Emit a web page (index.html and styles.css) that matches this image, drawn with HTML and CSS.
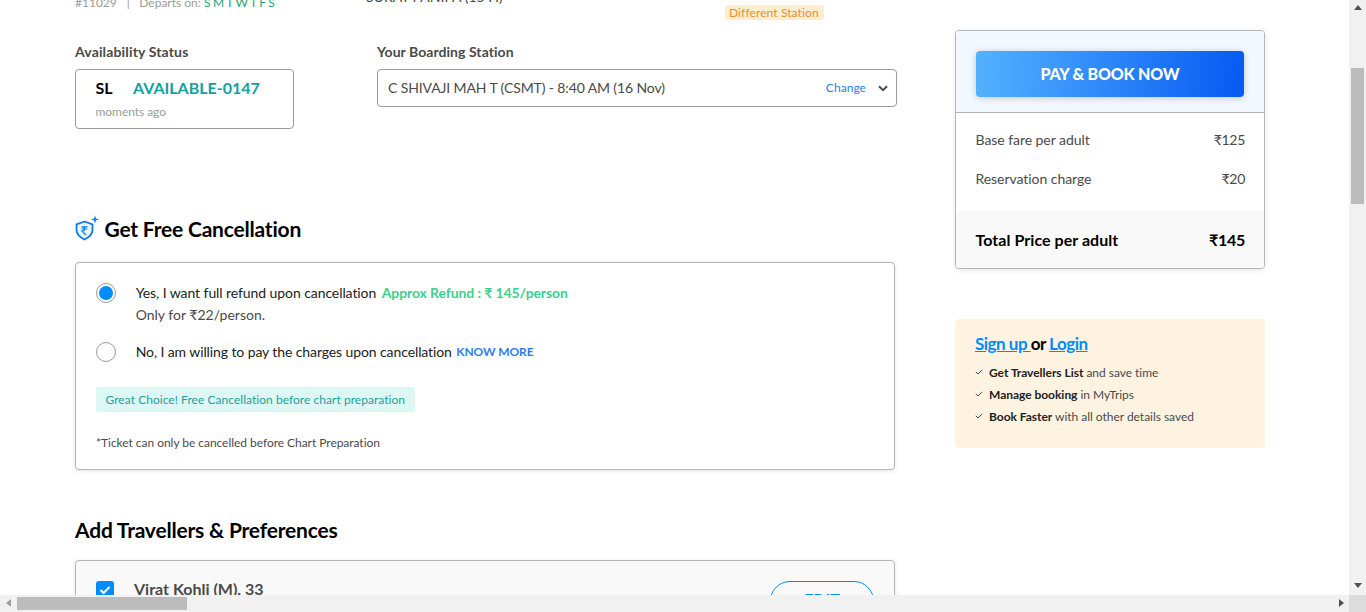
FILE: index.html
```html
<!DOCTYPE html>
<html lang="en">
<head>
<meta charset="utf-8">
<title>Review Booking</title>
<link rel="stylesheet" href="styles.css">
</head>
<body>
<div class="window">
  <div class="scrolled">
    <main class="left">
      <div class="train-row">
        <div class="train-meta"><span>#11029</span><span class="sep">|</span><span>Departs on: <b class="days">S M T W T F S</b></span></div>
        <div class="train-duration">SURAT PANIPA (15 H)</div>
        <div class="station-tag">Different Station</div>
      </div>
      <div class="status-row">
        <div class="status-col">
          <div class="field-label label-status">Availability Status</div>
          <div class="status-box">
            <div class="status-line"><span class="class-code">SL</span><span class="avail">AVAILABLE-0147</span></div>
            <div class="moments">moments ago</div>
          </div>
        </div>
        <div class="boarding-col">
          <div class="field-label">Your Boarding Station</div>
          <div class="boarding-box">
            <span class="boarding-name">C SHIVAJI MAH T (CSMT) - 8:40 AM (16 Nov)</span>
            <span class="change">Change</span>
            <svg class="chevron" width="10" height="7" viewBox="0 0 10 7"><path d="M1 1.200 5 5.200 9 1.200" fill="none" stroke="#4a4a4a" stroke-width="2"/></svg>
          </div>
        </div>
      </div>
      <h2 class="section-title cancel-title">
        <svg class="shield" width="26" height="26" viewBox="0 0 26 26">
          <path d="M10.500 6.500 18.500 9.300V15C18.500 19 14.500 22.500 10.500 24.500 6.500 22.500 2.500 19 2.500 15V9.300Z" fill="#eaf5ff" stroke="#0a7be8" stroke-width="1.800" stroke-linejoin="round"/>
          <path d="M7.500 11.800H13.500M7.500 14H13.500M8 11.800C11.500 11.800 11.500 16.200 8 16.200L12 20" fill="none" stroke="#0a7be8" stroke-width="1.200"/>
          <path d="M21 0.500 22 3.500 25 4.500 22 5.500 21 8.500 20 5.500 17 4.500 20 3.500Z" fill="#0a84f0"/>
        </svg>
        Get Free Cancellation
      </h2>
      <section class="card cancel-card">
        <div class="option option-yes">
          <span class="radio radio-on"></span>
          <div>
            <div class="option-text">Yes, I want full refund upon cancellation <b class="refund">Approx Refund : ₹ 145/person</b></div>
            <div class="only-for">Only for ₹22/person.</div>
          </div>
        </div>
        <div class="option option-no">
          <span class="radio"></span>
          <div class="option-text no-text">No, I am willing to pay the charges upon cancellation <b class="know-more">KNOW MORE</b></div>
        </div>
        <div class="choice">Great Choice! Free Cancellation before chart preparation</div>
        <div class="ticket-note">*Ticket can only be cancelled before Chart Preparation</div>
      </section>
      <h2 class="section-title travellers-title">Add Travellers &amp; Preferences</h2>
      <section class="card traveller-card">
        <span class="checkbox"><svg width="12" height="10" viewBox="0 0 12 10"><path d="M1.500 5 4.500 8 10.500 2" fill="none" stroke="#fff" stroke-width="2"/></svg></span>
        <div class="traveller-name">Virat Kohli (M), 33</div>
        <button class="edit">EDIT</button>
      </section>
    </main>
    <aside class="right">
      <section class="card fare-card">
        <div class="fare-head"><button class="pay">PAY &amp; BOOK NOW</button></div>
        <div class="fare-rows">
          <div class="fare-row"><span>Base fare per adult</span><span class="amount">₹125</span></div>
          <div class="fare-row"><span>Reservation charge</span><span class="amount">₹20</span></div>
        </div>
        <div class="fare-total"><span>Total Price per adult</span><span class="amount">₹145</span></div>
      </section>
      <section class="login-card">
        <div class="login-title"><a href="#">Sign up </a> or <a href="#">Login</a></div>
        <ul class="perks">
          <li><svg width="8" height="6" viewBox="0 0 8 6"><path d="M.8 2.800 3 5 7.200 .8" fill="none" stroke="#4a4a4a" stroke-width="1"/></svg><span><b>Get Travellers List</b> and save time</span></li>
          <li><svg width="8" height="6" viewBox="0 0 8 6"><path d="M.8 2.800 3 5 7.200 .8" fill="none" stroke="#4a4a4a" stroke-width="1"/></svg><span><b>Manage booking</b> in MyTrips</span></li>
          <li><svg width="8" height="6" viewBox="0 0 8 6"><path d="M.8 2.800 3 5 7.200 .8" fill="none" stroke="#4a4a4a" stroke-width="1"/></svg><span><b>Book Faster</b> with all other details saved</span></li>
        </ul>
      </section>
    </aside>
  </div>
  <div class="vbar"><span class="arrow-up"></span><span class="vthumb"></span><span class="arrow-down"></span></div>
  <div class="hbar"><span class="arrow-left"></span><span class="hthumb"></span><span class="arrow-right"></span></div>
  <div class="corner"></div>
</div>
</body>
</html>
```
FILE: styles.css
```css
* { box-sizing: border-box; }
html, body { margin: 0; height: 100%; overflow: hidden; background: #fff; }
body { font-family: Lato, "Noto Sans", sans-serif; color: #4a4a4a; }
.window { position: relative; width: 1366px; height: 612px; overflow: hidden; }
.scrolled { display: flex; align-items: flex-start; padding-left: 75px; margin-top: -6px; }
.left { width: 822px; flex: none; }
.right { width: 310px; margin-left: 58px; flex: none; padding-top: 36px; }

.train-row { display: flex; height: 28px; font-size: 12px; line-height: 16px; }
.train-meta { width: 291px; padding-top: 1px; color: #9b9b9b; white-space: nowrap; }
.train-meta .sep { margin: 0 9.500px 0 10px; }
.days { color: #1fa37a; font-weight: 400; letter-spacing: -.25px; }
.train-duration { width: 359px; margin-top: -5px; font-size: 14px; color: #4a4a4a; white-space: nowrap; }
.station-tag { width: 99px; height: 15px; margin-top: 11px; padding-left: 4px; line-height: 15px; font-size: 12px; letter-spacing: .1px; background: #ffedd1; color: #e2912a; border-radius: 3px; white-space: nowrap; }

.status-row { display: flex; margin-top: 21px; }
.status-col { width: 302px; }
.boarding-col { width: 520px; }
.field-label { font-size: 14px; line-height: 17px; font-weight: 700; letter-spacing: .05px; color: #4a4a4a; margin-bottom: 9px; }
.label-status { letter-spacing: .15px; }
.status-box { width: 219px; height: 60px; border: 1px solid #9b9b9b; border-radius: 4px; padding: 8px 19px 8px 19.500px; }
.status-line { display: flex; font-size: 16px; line-height: 20px; font-weight: 700; }
.class-code { width: 37.500px; color: #000; }
.avail { color: #12a1a1; }
.moments { font-size: 12px; line-height: 15px; margin-top: 6px; letter-spacing: -.05px; color: #9b9b9b; }
.boarding-box { display: flex; align-items: center; width: 520px; height: 38px; border: 1px solid #9b9b9b; border-radius: 4px; padding: 0 8px 2px 10px; font-size: 14px; letter-spacing: -.12px; color: #4a4a4a; }
.boarding-name { flex: 1; }
.change { font-size: 12px; letter-spacing: .05px; color: #2d7cf0; margin-right: 12px; }
.chevron { margin-top: 2px; }

.section-title { font-size: 21px; line-height: 27px; font-weight: 700; letter-spacing: -.2px; color: #000; margin: 0; display: flex; align-items: center; }
.cancel-title { margin-top: 86px; }
.shield { margin: -1px 4.500px 0 -1px; }
.travellers-title { margin-top: 46px; }

.card { background: #fff; border: 1px solid #b5b5b5; border-radius: 4px; box-shadow: 0 1px 5px rgba(0, 0, 0, .1); }
.cancel-card { width: 820px; height: 208px; margin-top: 20px; padding: 20px; }
.option { display: flex; font-size: 14px; color: #000; }
.radio { flex: none; width: 20px; height: 20px; margin-right: 19.700px; border: 1px solid #9b9b9b; border-radius: 50%; background: #fff; }
.radio-on { padding: 2px; background: #008cff content-box; }
.option-text { line-height: 20px; letter-spacing: -.08px; color: #222; }
.no-text { letter-spacing: -.1px; }
.only-for { line-height: 20px; margin-top: 2px; color: #4a4a4a; }
.refund { color: #40cf8e; margin-left: 2px; letter-spacing: -.1px; }
.know-more { font-size: 12px; line-height: 1; vertical-align: 1px; letter-spacing: -.1px; color: #2d7cf0; margin-left: 1px; }
.option-no { margin-top: 17px; }
.choice { display: inline-block; margin-top: 25px; height: 25px; line-height: 25px; padding: 0 9.500px; background: #dcf7f4; color: #1f9f9f; font-size: 12px; letter-spacing: .04px; border-radius: 2px; }
.ticket-note { margin-top: 23px; font-size: 12px; line-height: 15px; letter-spacing: -.04px; color: #4a4a4a; }

.traveller-card { display: flex; width: 820px; height: 100px; margin-top: 17px; padding: 20px; background: #f9f9f9; }
.checkbox { flex: none; display: flex; align-items: center; justify-content: center; width: 18px; height: 18px; margin-right: 20px; background: #008cff; border-radius: 3px; }
.traveller-name { flex: 1; margin-top: -1px; font-size: 16px; line-height: 18px; font-weight: 700; color: #4a4a4a; }
.edit { width: 104px; height: 40px; padding: 0 0 5px; border: 1px solid #008cff; border-radius: 20px; background: transparent; color: #008cff; font: 700 16px Lato, sans-serif; }

.fare-card { overflow: hidden; height: 239px; }
.fare-head { height: 82px; padding: 20px; background: #f2f8ff; border-bottom: 1px solid #b5b5b5; }
.pay { display: block; width: 268px; height: 46px; padding: 0 0 2px; border: 0; border-radius: 4px; background: linear-gradient(93deg, #53b2fe, #065af3); color: #fff; font: 900 16px Lato, sans-serif; letter-spacing: -.2px; box-shadow: 0 1px 7px rgba(0, 0, 0, .2); }
.fare-rows { padding: 7px 19px 0 19.500px; height: 98px; }
.fare-row { display: flex; justify-content: space-between; align-items: center; height: 39px; font-size: 14px; letter-spacing: -.05px; color: #4a4a4a; }
.amount { letter-spacing: -.3px; }
.fare-total { display: flex; justify-content: space-between; align-items: center; height: 58px; padding: 0 19px 2px 19.500px; background: #f9f9f9; color: #000; font-size: 16px; font-weight: 700; letter-spacing: .05px; }

.login-card { height: 129px; margin-top: 50px; padding: 15px 20px; background: #fef3e1; border-radius: 4px; }
.login-title { font-size: 17px; line-height: 20px; font-weight: 700; letter-spacing: -.5px; color: #000; }
.login-title a { color: #008cff; text-decoration: underline; }
.perks { list-style: none; margin: 7px 0 0; padding: 0; }
.perks li { display: flex; align-items: center; height: 22px; font-size: 12px; letter-spacing: -.03px; color: #4a4a4a; }
.perks svg { margin-right: 6px; flex: none; }
.perks b { font-weight: 700; color: #222; }

.vbar { position: absolute; top: 0; right: 0; width: 17px; height: 595px; background: #f1f1f1; }
.hbar { position: absolute; left: 0; bottom: 0; width: 1349px; height: 17px; background: #f1f1f1; }
.corner { position: absolute; right: 0; bottom: 0; width: 17px; height: 17px; background: #dcdcdc; }
.vthumb { position: absolute; left: 2px; top: 68px; width: 13px; height: 136px; background: #bcbcbc; }
.hthumb { position: absolute; left: 17px; top: 2px; width: 170px; height: 13px; background: #bcbcbc; }
.arrow-up, .arrow-down, .arrow-left, .arrow-right { position: absolute; width: 0; height: 0; border: 4px solid transparent; }
.arrow-up { left: 4.500px; top: 5px; border-width: 0 4px 5px; border-bottom-color: #505050; }
.arrow-down { left: 4.500px; top: 583px; border-width: 5px 4px 0; border-top-color: #505050; }
.arrow-left { left: 6px; top: 4px; border-width: 4px 5px 4px 0; border-right-color: #a0a0a0; }
.arrow-right { left: 1339px; top: 4px; border-width: 4px 0 4px 5px; border-left-color: #505050; }
```
